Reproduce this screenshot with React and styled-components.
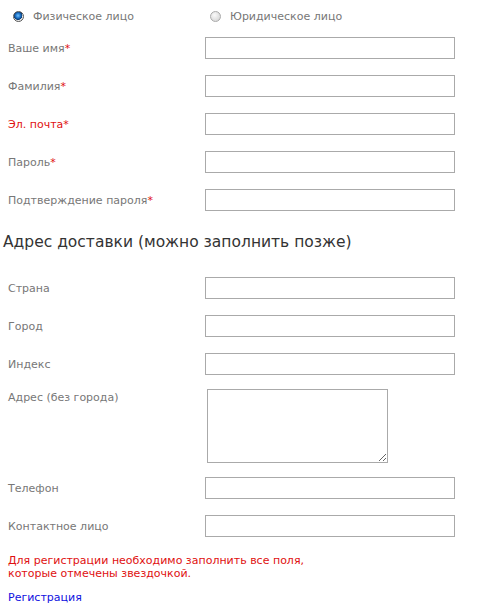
import React, { useState } from 'react';
import styled, { createGlobalStyle } from 'styled-components';

const GlobalStyle = createGlobalStyle`
  body {
    margin: 0;
    background: #fff;
    font-family: "DejaVu Sans", Verdana, sans-serif;
    font-size: 11px;
    color: #666;
  }
`;

const Form = styled.form`
  width: 486px;
  padding: 5px 0 0 8px;
  box-sizing: border-box;
`;

const RadioRow = styled.div`
  display: flex;
  align-items: center;
  height: 22px;
  margin-bottom: 10px;
`;

const RadioOption = styled.label`
  display: flex;
  align-items: center;
  gap: 9px;
  width: ${(p) => p.$width}px;
  padding-left: 5px;
  box-sizing: border-box;
  color: #777;
  cursor: pointer;
`;

const RadioDot = styled.span`
  width: 11px;
  height: 11px;
  border-radius: 50%;
  box-sizing: border-box;
  border: 1px solid ${(p) => (p.$checked ? '#555' : '#aaa')};
  background: ${(p) =>
    p.$checked
      ? 'radial-gradient(circle at 45% 40%, #6ec2ff 0, #1c6fc4 35%, #0b3d73 55%, #e8e8e8 62%, #f6f6f6 100%)'
      : 'radial-gradient(circle at 40% 35%, #fafafa 0, #dcdcdc 70%, #c8c8c8 100%)'};
`;

const Row = styled.div`
  display: grid;
  grid-template-columns: 197px 250px;
  align-items: ${(p) => (p.$top ? 'start' : 'center')};
  margin-bottom: ${(p) => p.$gap ?? 16}px;
`;

const Label = styled.span`
  color: ${(p) => (p.$error ? '#e01010' : '#777')};
  padding-top: ${(p) => (p.$top ? 2 : 0)}px;
`;

const Star = styled.span`
  color: #e01010;
`;

const Input = styled.input`
  width: 250px;
  height: 22px;
  box-sizing: border-box;
  border: 1px solid #aaa;
  padding: 2px 4px;
  font: inherit;
  outline: none;
`;

const TextArea = styled.textarea`
  width: 181px;
  height: 74px;
  margin-left: 2px;
  box-sizing: border-box;
  border: 1px solid #aaa;
  font: inherit;
  resize: both;
  outline: none;
`;

const Heading = styled.h2`
  margin: 19px 0 23px -5px;
  font-size: 15.5px;
  line-height: 24px;
  font-weight: normal;
  color: #333;
`;

const Notice = styled.p`
  margin: 17px 0 11px;
  color: #e01010;
  line-height: 13px;
`;

const Link = styled.a`
  display: block;
  line-height: 13px;
  color: #1010e0;
  text-decoration: none;
`;

const Field = ({ label, required, error, gap }) => (
  <Row $gap={gap}>
    <Label $error={error}>
      {label}
      {required && <Star>*</Star>}
    </Label>
    <Input type="text" />
  </Row>
);

export default function App() {
  const [kind, setKind] = useState('person');

  return (
    <>
      <GlobalStyle />
      <Form onSubmit={(e) => e.preventDefault()}>
        <RadioRow>
          <RadioOption $width={197} onClick={() => setKind('person')}>
            <RadioDot $checked={kind === 'person'} />
            Физическое лицо
          </RadioOption>
          <RadioOption $width={250} onClick={() => setKind('company')}>
            <RadioDot $checked={kind === 'company'} />
            Юридическое лицо
          </RadioOption>
        </RadioRow>

        <Field label="Ваше имя" required />
        <Field label="Фамилия" required />
        <Field label="Эл. почта" required error />
        <Field label="Пароль" required />
        <Field label="Подтверждение пароля" required gap={0} />

        <Heading>Адрес доставки (можно заполнить позже)</Heading>

        <Field label="Страна" />
        <Field label="Город" />
        <Field label="Индекс" gap={14} />
        <Row $top $gap={14}>
          <Label $top>Адрес (без города)</Label>
          <TextArea />
        </Row>
        <Field label="Телефон" />
        <Field label="Контактное лицо" gap={0} />

        <Notice>
          Для регистрации необходимо заполнить все поля,
          <br />
          которые отмечены звездочкой.
        </Notice>
        <Link href="#">Регистрация</Link>
      </Form>
    </>
  );
}
